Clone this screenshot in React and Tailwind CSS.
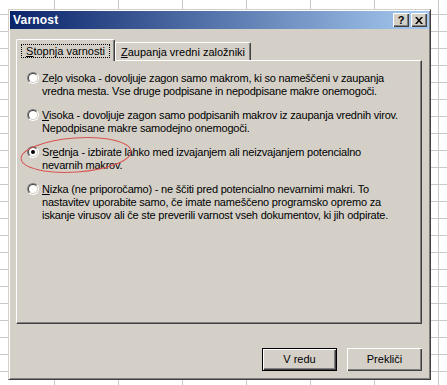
import React from 'react';

const FONT = "font-['Liberation_Sans',Arial,sans-serif]";

const Radio = ({ checked }) => (
  <div className="w-[12px] h-[12px] shrink-0 rounded-full border border-t-[#808080] border-l-[#808080] border-r-white border-b-white">
    <div className="w-full h-full rounded-full border border-t-[#404040] border-l-[#404040] border-r-[#d4d0c8] border-b-[#d4d0c8] bg-white flex items-center justify-center">
      {checked && <div className="w-[4px] h-[4px] rounded-full bg-black" />}
    </div>
  </div>
);

const Option = ({ checked, children }) => (
  <div className="flex items-start gap-[3px]">
    <Radio checked={checked} />
    <p className="text-[11px] leading-[13px] tracking-[-0.2px] text-black">{children}</p>
  </div>
);

const Button = ({ label, primary }) => (
  <button
    className={`w-[75px] h-[23px] text-[11px] text-black bg-[#d4d0c8] ${
      primary
        ? 'border border-black shadow-[inset_1px_1px_#fff,inset_-1px_-1px_#404040,inset_-2px_-2px_#808080]'
        : 'shadow-[inset_1px_1px_#fff,inset_-1px_-1px_#404040,inset_-2px_-2px_#808080]'
    }`}
  >
    {label}
  </button>
);

const TitleButton = ({ children }) => (
  <div className="w-[16px] h-[14px] bg-[#d4d0c8] shadow-[inset_1px_1px_#fff,inset_-1px_-1px_#404040,inset_-2px_-2px_#808080] flex items-center justify-center">
    {children}
  </div>
);

const App = () => {
  const cols = ['w-[55px]', 'w-[64px]', 'w-[64px]', 'w-[64px]', 'w-[64px]', 'w-[64px]', 'w-[64px]', 'w-[64px]'];
  const rows = Array.from({ length: 23 }, (_, i) => i);

  return (
    <div className={`relative w-[447px] h-[385px] overflow-hidden bg-white ${FONT}`}>
      {/* spreadsheet behind the dialog */}
      <div className="flex flex-col">
        {rows.map((r) => (
          <div key={r} className={`flex shrink-0 ${r === 0 ? 'h-[15px]' : 'h-[17px]'}`}>
            {cols.map((c, i) => (
              <div key={i} className={`${c} shrink-0 h-full border-r border-b border-[#c8c8c8]`} />
            ))}
          </div>
        ))}
      </div>

      {/* dialog window */}
      <div className="absolute left-[8px] top-[9px] w-[423px] h-[371px] bg-[#d4d0c8] border border-t-[#d4d0c8] border-l-[#d4d0c8] border-r-[#404040] border-b-[#404040] shadow-[inset_1px_1px_#fff,inset_-1px_-1px_#808080] p-[1px]">
        <div className="h-[18px] bg-[linear-gradient(to_right,#0a246a,#a6caf0)] flex items-center justify-between pl-[3px] pr-[2px]">
          <span className="text-[12px] font-bold text-white leading-none tracking-[0.2px]">Varnost</span>
          <div className="flex gap-[2px]">
            <TitleButton>
              <span className="text-[11px] font-bold leading-none text-black">?</span>
            </TitleButton>
            <TitleButton>
              <svg width="8" height="7" viewBox="0 0 8 7">
                <path d="M0 0h2l2 2.5L6 0h2L5 3.5 8 7H6L4 4.5 2 7H0l3-3.5z" fill="black" />
              </svg>
            </TitleButton>
          </div>
        </div>

        <div className="ml-[6px] w-[406px] mt-[10px]">
          {/* tabs */}
          <div className="flex items-end h-[21px]">
            <div className="relative z-10 h-[22px] -mb-[1px] w-[99px] bg-[#d4d0c8] border-t border-l border-white rounded-tl-[2px] rounded-tr-[2px] border-r border-r-[#404040] shadow-[inset_-1px_0_#808080] flex items-start justify-center pt-[4px]">
              <span className="border border-dotted border-black px-[4px] text-[11px] leading-[12px] text-black">
                <span className="underline">S</span>topnja varnosti
              </span>
            </div>
            <div className="h-[18px] w-[136px] border-t border-l border-white rounded-tr-[2px] border-r border-r-[#404040] shadow-[inset_-1px_0_#808080] flex items-center justify-center">
              <span className="text-[11px] leading-[12px] text-black">
                <span className="underline">Z</span>aupanja vredni založniki
              </span>
            </div>
          </div>

          {/* tab panel */}
          <div className="h-[264px] border border-t-white border-l-white border-r-[#404040] border-b-[#404040] shadow-[inset_-1px_-1px_#808080] pl-[10px] pt-[11px] flex flex-col gap-[11px]">
            <Option>
              Ze<span className="underline">l</span>o visoka - dovoljuje zagon samo makrom, ki so nameščeni v zaupanja
              <br />
              vredna mesta. Vse druge podpisane in nepodpisane makre onemogoči.
            </Option>
            <Option>
              <span className="underline">V</span>isoka - dovoljuje zagon samo podpisanih makrov iz zaupanja vrednih virov.
              <br />
              Nepodpisane makre samodejno onemogoči.
            </Option>
            <Option checked>
              Sr<span className="underline">e</span>dnja - izbirate lahko med izvajanjem ali neizvajanjem potencialno
              <br />
              nevarnih makrov.
            </Option>
            <Option>
              <span className="underline">N</span>izka (ne priporočamo) - ne ščiti pred potencialno nevarnimi makri. To
              <br />
              nastavitev uporabite samo, če imate nameščeno programsko opremo za
              <br />
              iskanje virusov ali če ste preverili varnost vseh dokumentov, ki jih odpirate.
            </Option>
          </div>

          <div className="flex justify-end gap-[10px] mt-[24px]">
            <Button label="V redu" primary />
            <Button label="Prekliči" />
          </div>
        </div>
      </div>

      {/* red hand-drawn ellipse annotation */}
      <svg className="absolute left-0 top-0 pointer-events-none" width="447" height="385">
        <ellipse cx="76" cy="155" rx="55" ry="17" transform="rotate(-4 76 155)" fill="none" stroke="#d9534f" strokeWidth="1" />
      </svg>
    </div>
  );
};

export default App;
